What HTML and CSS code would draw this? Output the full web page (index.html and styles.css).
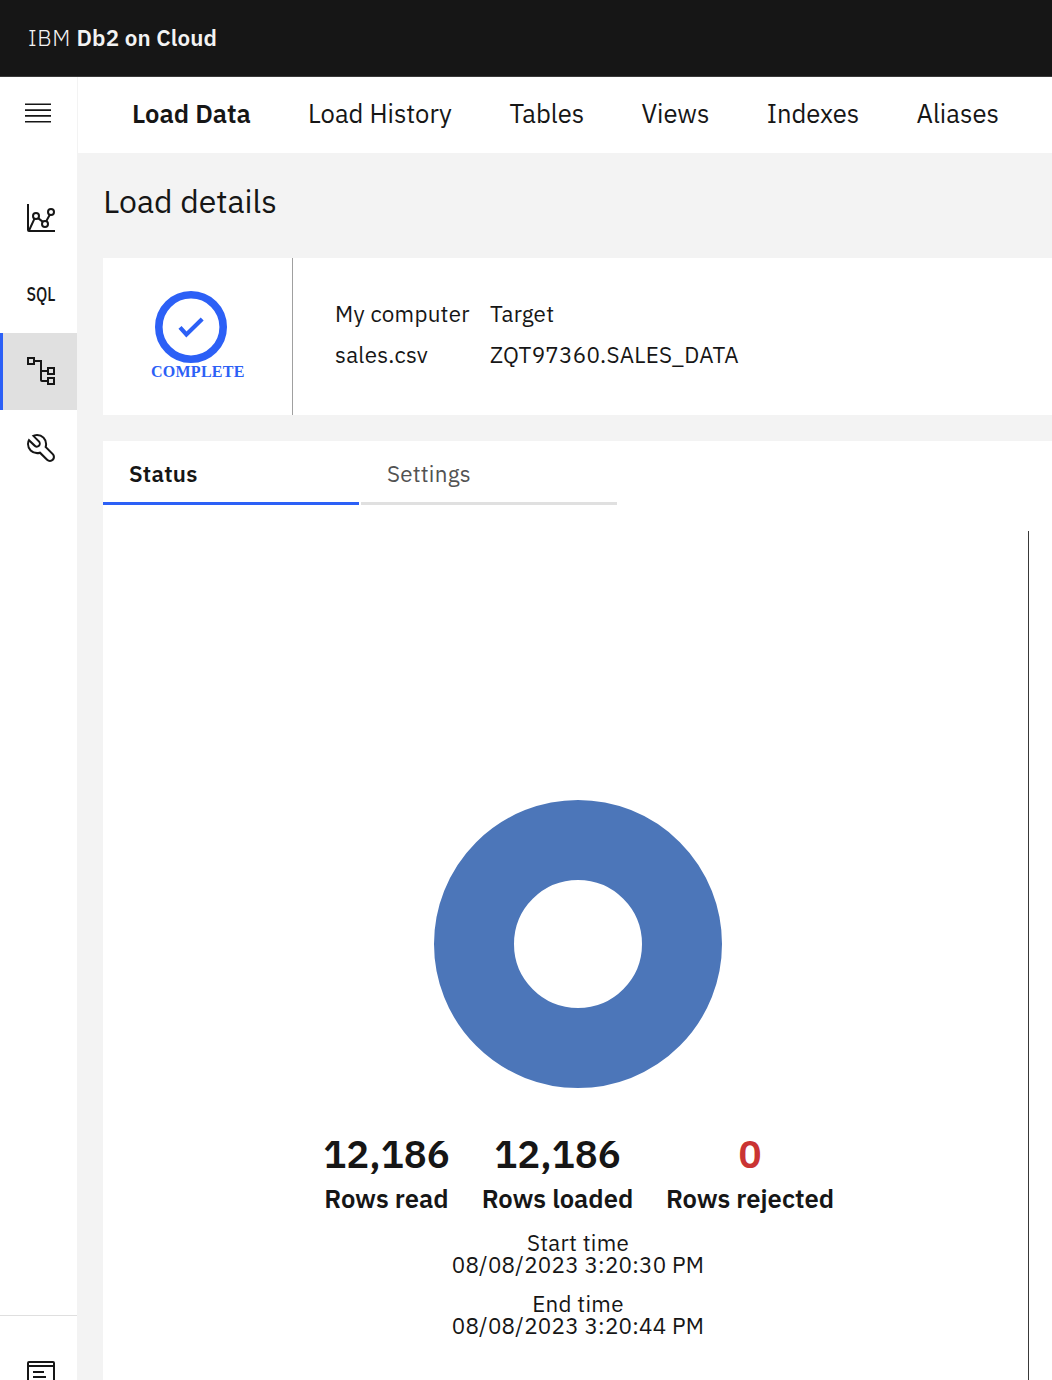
FILE: index.html
```html
<!DOCTYPE html>
<html lang="en">
<head>
<meta charset="utf-8">
<title>IBM Db2 on Cloud</title>
<link rel="stylesheet" href="styles.css">
</head>
<body>
<header class="header"><span class="brand">IBM</span><strong class="product">Db2 on Cloud</strong></header>
<div class="shell">
  <aside class="sidebar">
    <button class="menu" aria-label="Menu">
      <svg width="26" height="20" viewBox="0 0 26 20" stroke="#161616" stroke-width="1.6"><path d="M0 1.2H26M0 7.1H26M0 12.9H26M0 18.7H26"/></svg>
    </button>
    <nav class="side-nav">
      <a class="side-item"><svg class="icon" viewBox="0 0 32 32" fill="none" stroke="#161616" stroke-width="2"><path d="M3 2V28a1 1 0 0 0 1 1H30M4 28.5L9.5 16.7M13.1 16.1L17.9 19.9M21.2 19.2L24.8 12.8"/><circle cx="11" cy="14" r="3"/><circle cx="20" cy="22" r="3"/><circle cx="26" cy="10" r="3"/></svg></a>
      <a class="side-item"><svg class="icon" viewBox="0 0 32 32"><text class="sql" x="1.4" y="23" textLength="29" lengthAdjust="spacingAndGlyphs">SQL</text></svg></a>
      <a class="side-item active"><svg class="icon" viewBox="0 0 32 32" fill="none" stroke="#161616" stroke-width="2"><path d="M3 3H9V9H3ZM23 13H29V19H23ZM23 23H29V29H23ZM10 6H16V25a1 1 0 0 0 1 1H22M16 16H22"/></svg></a>
      <a class="side-item"><svg class="icon" viewBox="0 0 32 32"><path fill="#161616" d="M12.1,2a9.8,9.8,0,0,0-5.4,1.6l6.4,6.4a2.1,2.1,0,0,1,.2,3,2.1,2.1,0,0,1-3-.2L3.7,6.4A9.84,9.84,0,0,0,2,12.1,10.14,10.14,0,0,0,12.1,22.2a10.9,10.9,0,0,0,2.6-.3l6.7,6.7a5,5,0,0,0,7.1-7.1l-6.7-6.7a10.9,10.9,0,0,0,.3-2.6A10,10,0,0,0,12.1,2Zm8,10.1a7.61,7.61,0,0,1-.3,2.1l-.3,1.1.8.8,6.7,6.7a2.88,2.88,0,0,1,.9,2.1A2.72,2.72,0,0,1,27,27a2.9,2.9,0,0,1-4.2,0l-6.7-6.7-.8-.8-1.1.3a7.61,7.61,0,0,1-2.1.3,8.27,8.27,0,0,1-5.7-2.3A7.63,7.63,0,0,1,4,12.1a8.33,8.33,0,0,1,.3-2.2l4.4,4.4a4.14,4.14,0,0,0,5.9.2,4.14,4.14,0,0,0-.2-5.9L10,4.2a6.45,6.45,0,0,1,2-.3,8.27,8.27,0,0,1,5.7,2.3A8.49,8.49,0,0,1,20.1,12.1Z"/></svg></a>
    </nav>
    <div class="side-foot"><svg class="icon" viewBox="0 0 32 32" fill="none" stroke="#161616" stroke-width="2"><rect x="3" y="5" width="26" height="24" rx="1"/><path d="M3 9H29M8 15H19M8 20H21"/></svg></div>
  </aside>
  <main class="main">
    <nav class="tabs">
      <a class="tab load-data">Load Data</a><a class="tab history">Load History</a><a class="tab tables">Tables</a><a class="tab views">Views</a><a class="tab indexes">Indexes</a><a class="tab aliases">Aliases</a>
    </nav>
    <h1 class="title"><span>Load details</span></h1>
    <section class="summary">
      <div class="state">
        <svg width="72" height="72" viewBox="0 0 72 72"><circle cx="36" cy="36" r="32.2" fill="none" stroke="#2c60f6" stroke-width="7.6"/><path fill="none" stroke="#2c60f6" stroke-width="4.2" d="M25 36.4L31.4 43.4L47.2 28"/></svg>
        <span class="state-label">COMPLETE</span>
      </div>
      <dl class="route">
        <div class="source"><dt>My computer</dt><dd class="file">sales.csv</dd></div>
        <div><dt class="target">Target</dt><dd class="table-name">ZQT97360.SALES_DATA</dd></div>
      </dl>
    </section>
    <section class="details">
      <div class="subtabs"><a class="subtab selected">Status</a><a class="subtab">Settings</a></div>
      <div class="report">
        <svg class="donut" width="288" height="288" viewBox="0 0 288 288"><circle cx="144" cy="144" r="104" fill="none" stroke="#4c76b9" stroke-width="80"/></svg>
        <div class="counts">
          <div class="count read"><b>12,186</b><span>Rows read</span></div>
          <div class="count loaded"><b>12,186</b><span>Rows loaded</span></div>
          <div class="count rejected"><b>0</b><span>Rows rejected</span></div>
        </div>
        <div class="time"><span class="start">Start time</span><span class="stamp">08/08/2023 3:20:30 PM</span></div>
        <div class="time"><span class="end">End time</span><span class="stamp">08/08/2023 3:20:44 PM</span></div>
      </div>
    </section>
  </main>
</div>
</body>
</html>
```
FILE: styles.css
```css
* { box-sizing: border-box; }
body { margin: 0; height: 1380px; overflow: hidden; background: #f3f3f3; color: #161616; font-family: "IBM Plex Sans", Roboto, "Liberation Sans", sans-serif; font-size: 22.4px; }
.header { height: 77px; background: #161616; border-bottom: 1px solid #393939; color: #f3f3f3; display: flex; align-items: center; padding-left: 28px; line-height: 30px; }
.brand { font-weight: 300; width: 48.5px; letter-spacing: 0.6px; }
.product { font-weight: 600; letter-spacing: 0.15px; }
.shell { display: flex; height: 1303px; }
.sidebar { width: 77px; flex: none; background: #fff; display: flex; flex-direction: column; }
.menu { border: 0; background: none; height: 102px; padding: 26px 0 0 25px; text-align: left; display: flex; align-items: flex-start; }
.side-nav { display: flex; flex-direction: column; flex: 1; }
.side-item { height: 77px; padding: 22px 0 0 25px; }
.side-item:first-child { padding-top: 23px; }
.side-item.active { background: #e0e0e0; border-left: 3px solid #2c60f6; padding-left: 22px; }
.icon { width: 32px; height: 32px; display: block; }
.sql { font: 500 20px "IBM Plex Sans", Roboto, sans-serif; fill: #161616; }
.side-foot { height: 65px; border-top: 1px solid #dfdfdf; padding: 41px 0 0 25px; overflow: hidden; }
.main { flex: 1; min-width: 0; }
.tabs { display: flex; gap: 58px; height: 76px; background: #fff; border-left: 1px solid #f3f3f3; padding-left: 54px; font-size: 25.6px; line-height: 74px; white-space: nowrap; }
.tab { flex: none; }
.load-data { font-weight: 600; width: 118px; }
.history { width: 143.4px; }
.tables { width: 74px; }
.views { width: 67.3px; }
.indexes { width: 91.8px; }
.aliases { width: 82px; }
.title { margin: 0; height: 105px; padding-left: 26.3px; font-size: 32px; font-weight: 400; line-height: 96px; }
.summary { margin-left: 26px; height: 157px; background: #fff; display: flex; }
.state { width: 190px; border-right: 1px solid #a0a0a0; padding: 33px 0 0 48px; display: flex; flex-direction: column; }
.state svg { margin-left: 4px; display: block; }
.state-label { font: bold 16px/18px "Liberation Serif", serif; letter-spacing: 0.256px; color: #2c60f6; }
.route { margin: 0; padding: 35px 0 0 42px; display: flex; line-height: 41px; letter-spacing: 0.256px; white-space: nowrap; }
.route dd { margin: 0; }
.source { width: 155px; }
.details { margin: 26px 0 0 26px; height: 939px; background: #fff; }
.subtabs { display: flex; gap: 2px; height: 64px; letter-spacing: 0.256px; }
.subtab { width: 256px; padding-left: 26px; line-height: 66px; border-bottom: 3px solid #e0e0e0; color: #525252; height: 64px; }
.selected { color: #161616; font-weight: 600; border-color: #2c60f6; }
.report { margin-top: 26px; width: 926px; height: 849px; border-right: 1px solid #393939; padding: 269px 0 0 25px; display: flex; flex-direction: column; align-items: center; }
.donut { display: block; flex: none; }
.counts { display: flex; gap: 34px; margin: 39px 0 0 2px; height: 105px; font-weight: 600; }
.count { display: flex; flex-direction: column; align-items: center; white-space: nowrap; }
.count b { font-size: 38.4px; line-height: 54px; font-weight: 600; }
.count span { font-size: 25.6px; line-height: 36px; }
.read { width: 124px; }
.loaded { width: 150px; }
.rejected { width: 167px; }
.rejected b { color: #ca3433; }
.time { display: flex; flex-direction: column; align-items: center; line-height: 22px; letter-spacing: 0.256px; margin-bottom: 17px; }
```
